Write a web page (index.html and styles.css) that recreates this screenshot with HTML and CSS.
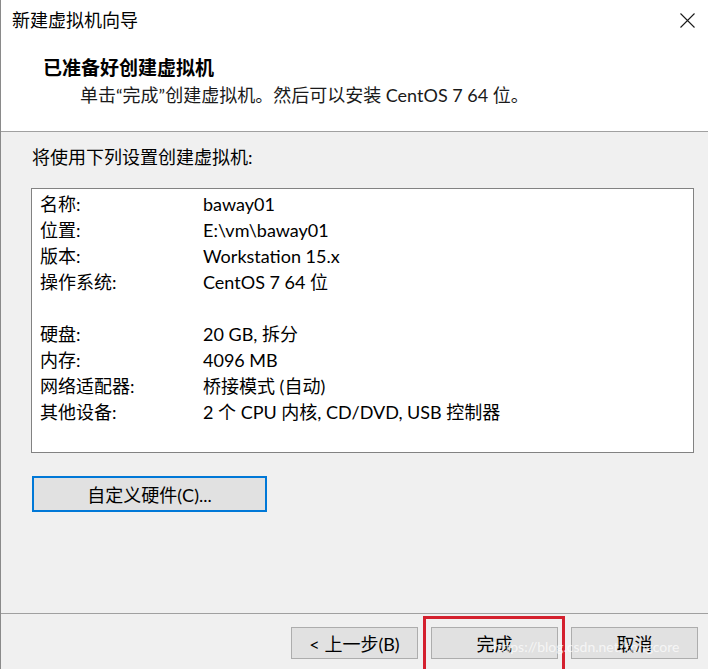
FILE: index.html
```html
<!DOCTYPE html>
<html lang="zh-CN">
  <head>
    <meta charset="UTF-8" />
    <meta name="viewport" content="width=device-width, initial-scale=1.0" />
    <title>新建虚拟机向导</title>
    <link rel="stylesheet" href="styles.css">
  </head>
  <body>
    <div class="dialog">
      <!-- header -->
      <div class="header">
        <div class="titlebar">
          <span class="title">新建虚拟机向导</span>
          <svg class="close" width="15" height="15" viewBox="0 0 15 15">
            <path d="M0.5 0.5 L14.5 14.5 M14.5 0.5 L0.5 14.5" stroke="#1a1a1a" stroke-width="1.1" fill="none" />
          </svg>
        </div>
        <div class="heading">已准备好创建虚拟机</div>
        <div class="subtitle">单击“完成”创建虚拟机。然后可以安装 CentOS 7 64 位。</div>
      </div>

      <!-- settings summary -->
      <div class="main">
        <div class="intro">将使用下列设置创建虚拟机:</div>
        <div class="summary">
          <div class="label">名称:</div><div class="value">baway01</div>
          <div class="label">位置:</div><div class="value">E:\vm\baway01</div>
          <div class="label">版本:</div><div class="value">Workstation 15.x</div>
          <div class="label">操作系统:</div><div class="value">CentOS 7 64 位</div>
          <div class="spacer"></div>
          <div class="label">硬盘:</div><div class="value">20 GB, 拆分</div>
          <div class="label">内存:</div><div class="value">4096 MB</div>
          <div class="label">网络适配器:</div><div class="value">桥接模式 (自动)</div>
          <div class="label">其他设备:</div><div class="value">2 个 CPU 内核, CD/DVD, USB 控制器</div>
        </div>
        <button class="btn custom">自定义硬件(C)...</button>
      </div>

      <!-- footer buttons -->
      <div class="footer">
        <button class="btn">&lt; 上一步(B)</button>
        <div class="highlight">
          <button class="btn">完成</button>
        </div>
        <button class="btn">取消</button>
        <span class="watermark">https://blog.csdn.net/tongcore</span>
      </div>
    </div>
  </body>
</html>
```

FILE: styles.css
```css
body {
  margin: 0;
  padding: 0;
  font-family: Lato, "Noto Sans CJK SC", sans-serif;
  background-color: #f0f0f0;
  color: #000;
  overflow: hidden;
}

.dialog {
  width: 708px;
  height: 669px;
  display: flex;
  flex-direction: column;
  border-left: 1px solid #8a8a8a;
  box-sizing: border-box;
}

/* Header (white) */
.header {
  background: #fff;
  height: 131px;
  border-bottom: 1px solid #a0a0a0;
}

.titlebar {
  display: flex;
  justify-content: space-between;
  align-items: center;
  height: 40px;
  padding: 0 13px 0 11px;
}

.title {
  font-size: 18px;
  line-height: 40px;
}

.close {
  display: block;
}

.heading {
  font-size: 19px;
  font-weight: bold;
  line-height: 26px;
  margin: 15px 0 0 42px;
}

.subtitle {
  font-size: 18px;
  line-height: 26px;
  margin: 1px 0 0 79px;
  color: #1a1a1a;
}

/* Main area */
.main {
  flex: 1;
  padding: 12px 0 0 30px;
}

.intro {
  font-size: 18px;
  line-height: 26px;
  margin-left: 1px;
}

.summary {
  margin-top: 18px;
  width: 663px;
  height: 265px;
  box-sizing: border-box;
  background: #fff;
  border: 1px solid #828282;
  padding: 2px 8px 0;
  display: grid;
  grid-template-columns: 163px 1fr;
  grid-auto-rows: 26px;
  font-size: 18px;
  line-height: 26px;
}

.spacer {
  grid-column: 1 / 3;
}

.btn {
  font-family: inherit;
  font-size: 18px;
  color: #000;
  background: #e1e1e1;
  border: 1px solid #adadad;
  padding: 0;
  width: 127px;
  height: 32px;
  cursor: pointer;
}

.custom {
  margin: 23px 0 0 1px;
  width: 235px;
  height: 36px;
  border: 2px solid #0078d7;
}

/* Footer */
.footer {
  height: 56px;
  border-top: 1px solid #a0a0a0;
  box-sizing: border-box;
  display: flex;
  justify-content: flex-end;
  gap: 13px;
  padding: 13px 10px 0 0;
  position: relative;
}

.highlight {
  position: relative;
  height: 32px;
}

.highlight::before {
  content: "";
  position: absolute;
  left: -8px;
  right: -7px;
  top: -11px;
  bottom: -14px;
  border: 3px solid #d4202e;
  pointer-events: none;
}

.watermark {
  position: absolute;
  left: 492px;
  top: 24px;
  font-size: 14px;
  line-height: 18px;
  color: rgba(255, 255, 255, 0.7);
  pointer-events: none;
}
```
